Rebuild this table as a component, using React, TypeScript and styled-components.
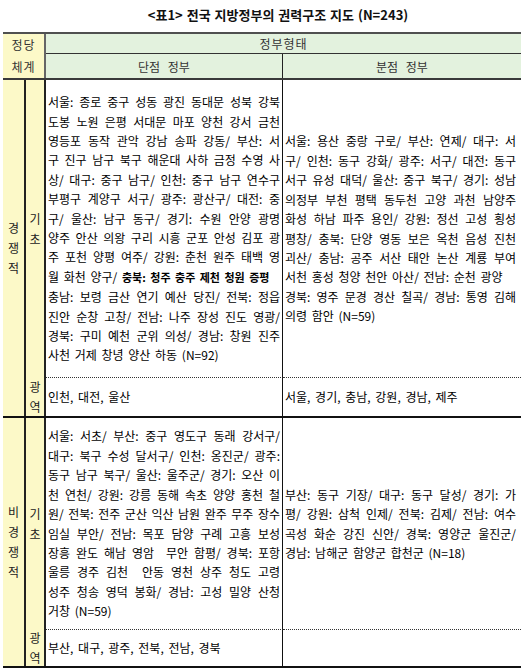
import React from "react"
import styled, { createGlobalStyle } from "styled-components"

type Line = { text: React.ReactNode; end?: boolean }

interface Block {
    type: string
    localHeight: number
    metroHeight: number
    unified: Line[]
    divided: Line[]
    unifiedMetro: string
    dividedMetro: string
}

const YELLOW = "#fcf9c8"
const GREEN = "#e3f2de"

// smaller bold run used inside one line of the table
const Small = styled.span`
    font-size: 11px;
    font-weight: 700;
    word-spacing: 2px;
`

const blocks: Block[] = [
    {
        type: "경쟁적",
        localHeight: 298,
        metroHeight: 38,
        unified: [
            { text: "서울: 종로 중구 성동 광진 동대문 성북 강북" },
            { text: "도봉 노원 은평 서대문 마포 양천 강서 금천" },
            { text: "영등포 동작 관악 강남 송파 강동/ 부산: 서" },
            { text: "구 진구 남구 북구 해운대 사하 금정 수영 사" },
            { text: "상/ 대구: 중구 남구/ 인천: 중구 남구 연수구" },
            { text: "부평구 계양구 서구/ 광주: 광산구/ 대전: 중" },
            { text: "구/ 울산: 남구 동구/ 경기: 수원 안양 광명" },
            { text: "양주 안산 의왕 구리 시흥 군포 안성 김포 광" },
            { text: "주 포천 양평 여주/ 강원: 춘천 원주 태백 영" },
            { text: <>월 화천 양구/ <Small>충북: 청주 충주 제천 청원 증평</Small></>, end: true },
            { text: "충남: 보령 금산 연기 예산 당진/ 전북: 정읍" },
            { text: "진안 순창 고창/ 전남: 나주 장성 진도 영광/" },
            { text: "경북: 구미 예천 군위 의성/ 경남: 창원 진주" },
            { text: "사천 거제 창녕 양산 하동 (N=92)", end: true },
        ],
        divided: [
            { text: "서울: 용산 중랑 구로/ 부산: 연제/ 대구: 서" },
            { text: "구/ 인천: 동구 강화/ 광주: 서구/ 대전: 동구" },
            { text: "서구 유성 대덕/ 울산: 중구 북구/ 경기: 성남" },
            { text: "의정부 부천 평택 동두천 고양 과천 남양주" },
            { text: "화성 하남 파주 용인/ 강원: 정선 고성 횡성" },
            { text: "평창/ 충북: 단양 영동 보은 옥천 음성 진천" },
            { text: "괴산/ 충남: 공주 서산 태안 논산 계룡 부여" },
            { text: "서천 홍성 청양 천안 아산/ 전남: 순천 광양", end: true },
            { text: "경북: 영주 문경 경산 칠곡/ 경남: 통영 김해" },
            { text: "의령 함안 (N=59)", end: true },
        ],
        unifiedMetro: "인천, 대전, 울산",
        dividedMetro: "서울, 경기, 충남, 강원, 경남, 제주",
    },
    {
        type: "비경쟁적",
        localHeight: 212,
        metroHeight: 36,
        unified: [
            { text: "서울: 서초/ 부산: 중구 영도구 동래 강서구/" },
            { text: "대구: 북구 수성 달서구/ 인천: 옹진군/ 광주:" },
            { text: "동구 남구 북구/ 울산: 울주군/ 경기: 오산 이" },
            { text: "천 연천/ 강원: 강릉 동해 속초 양양 홍천 철" },
            { text: "원/ 전북: 전주 군산 익산 남원 완주 무주 장수" },
            { text: "임실 부안/ 전남: 목포 담양 구례 고흥 보성" },
            { text: "장흥 완도 해남 영암 \u00a0무안 함평/ 경북: 포항" },
            { text: "울릉 경주 김천 \u00a0안동 영천 상주 청도 고령" },
            { text: "성주 청송 영덕 봉화/ 경남: 고성 밀양 산청" },
            { text: "거창 (N=59)", end: true },
        ],
        divided: [
            { text: "부산: 동구 기장/ 대구: 동구 달성/ 경기: 가" },
            { text: "평/ 강원: 삼척 인제/ 전북: 김제/ 전남: 여수" },
            { text: "곡성 화순 강진 신안/ 경북: 영양군 울진군/" },
            { text: "경남: 남해군 함양군 합천군 (N=18)", end: true },
        ],
        unifiedMetro: "부산, 대구, 광주, 전북, 전남, 경북",
        dividedMetro: "",
    },
]

const App: React.FC = () => {
    return (
        <>
            <GlobalStyle />
            <Title>&lt;표1&gt; 전국 지방정부의 권력구조 지도 (N=243)</Title>
            <Table>
                <HeaderGrid>
                    <Corner>
                        <CornerLabel>정당</CornerLabel>
                        <CornerLabel>체계</CornerLabel>
                    </Corner>
                    <GovType>정부형태</GovType>
                    <SubHead $divider>단점 정부</SubHead>
                    <SubHead>분점 정부</SubHead>
                </HeaderGrid>

                {blocks.map((block) => (
                    <Section key={block.type} $local={block.localHeight} $metro={block.metroHeight}>
                        <TypeCell>
                            {block.type.split("").map((ch, i) => (
                                <span key={i}>{ch}</span>
                            ))}
                        </TypeCell>
                        <LevelCell>
                            <span>기</span>
                            <span>초</span>
                        </LevelCell>
                        <DataCell $divider $dotted>
                            {block.unified.map((l, i) => (
                                <TextLine key={i} $fill={!l.end}>{l.text}</TextLine>
                            ))}
                        </DataCell>
                        <DataCell $dotted $wide>
                            {block.divided.map((l, i) => (
                                <TextLine key={i} $fill={!l.end}>{l.text}</TextLine>
                            ))}
                        </DataCell>
                        <LevelCell>
                            <span>광</span>
                            <span>역</span>
                        </LevelCell>
                        <DataCell $divider>
                            <TextLine>{block.unifiedMetro}</TextLine>
                        </DataCell>
                        <DataCell $wide>
                            <TextLine>{block.dividedMetro}</TextLine>
                        </DataCell>
                    </Section>
                ))}
            </Table>
        </>
    )
}

const GlobalStyle = createGlobalStyle`
    html, body {
        margin: 0;
        padding: 0;
        background: #ffffff;
    }
    body {
        font-family: "Noto Sans CJK KR", "Noto Sans", sans-serif;
        color: #000;
    }
`

const Title = styled.div`
    height: 32px;
    line-height: 30px;
    padding-left: 30px;
    text-align: center;
    font-size: 13px;
    font-weight: 700;
    word-spacing: 1px;
    color: #111;
`

const Table = styled.div`
    margin-left: 3px;
    width: 518px;
    border-top: 2px solid #505050;
`

const HeaderGrid = styled.div`
    display: grid;
    grid-template-columns: 43px 237px 238px;
    grid-template-rows: 20px 24px;
    border-bottom: 2px solid #3a3a3a;
    font-size: 12px;
    color: #333;
`

const Corner = styled.div`
    grid-row: 1 / span 2;
    grid-column: 1;
    display: grid;
    grid-template-rows: 20px 24px;
    background: ${YELLOW};
    border-right: 2px solid #666;
`

const CornerLabel = styled.div`
    display: flex;
    align-items: center;
    justify-content: center;
    letter-spacing: 1px;
`

const GovType = styled.div`
    grid-row: 1;
    grid-column: 2 / span 2;
    display: flex;
    align-items: center;
    justify-content: center;
    background: ${GREEN};
    border-bottom: 1px solid #333;
    letter-spacing: 1px;
`

const SubHead = styled.div<{ $divider?: boolean }>`
    grid-row: 2;
    display: flex;
    align-items: center;
    justify-content: center;
    background: ${GREEN};
    border-right: ${(p) => (p.$divider ? "1px solid #222" : "none")};
    word-spacing: 5px;
`

const Section = styled.div<{ $local: number; $metro: number }>`
    display: grid;
    grid-template-columns: 23px 20px 237px 238px;
    grid-template-rows: ${(p) => p.$local}px ${(p) => p.$metro}px;
    border-bottom: 2px solid #111;
`

const TypeCell = styled.div`
    grid-row: 1 / span 2;
    grid-column: 1;
    display: flex;
    flex-direction: column;
    align-items: center;
    justify-content: center;
    background: ${YELLOW};
    border-right: 2px solid #222;
    font-size: 12px;
    line-height: 20px;
    color: #222;
`

const LevelCell = styled.div`
    grid-column: 2;
    display: flex;
    flex-direction: column;
    align-items: center;
    justify-content: center;
    background: ${YELLOW};
    border-right: 2px solid #222;
    font-size: 12px;
    line-height: 20px;
    color: #222;
`

const DataCell = styled.div<{ $divider?: boolean; $dotted?: boolean; $wide?: boolean }>`
    display: flex;
    flex-direction: column;
    justify-content: center;
    padding: ${(p) => (p.$wide ? "0 5px 0 2px" : "0 2px")};
    border-right: ${(p) => (p.$divider ? "1px solid #111" : "none")};
    border-bottom: ${(p) => (p.$dotted ? "1px dotted #333" : "none")};
    font-size: 12px;
    line-height: 19.4px;
`

const TextLine = styled.div<{ $fill?: boolean }>`
    white-space: ${(p) => (p.$fill ? "normal" : "nowrap")};
    word-spacing: ${(p) => (p.$fill ? "-1px" : "2px")};
    text-align: justify;
    text-align-last: ${(p) => (p.$fill ? "justify" : "left")};
`

export default App
